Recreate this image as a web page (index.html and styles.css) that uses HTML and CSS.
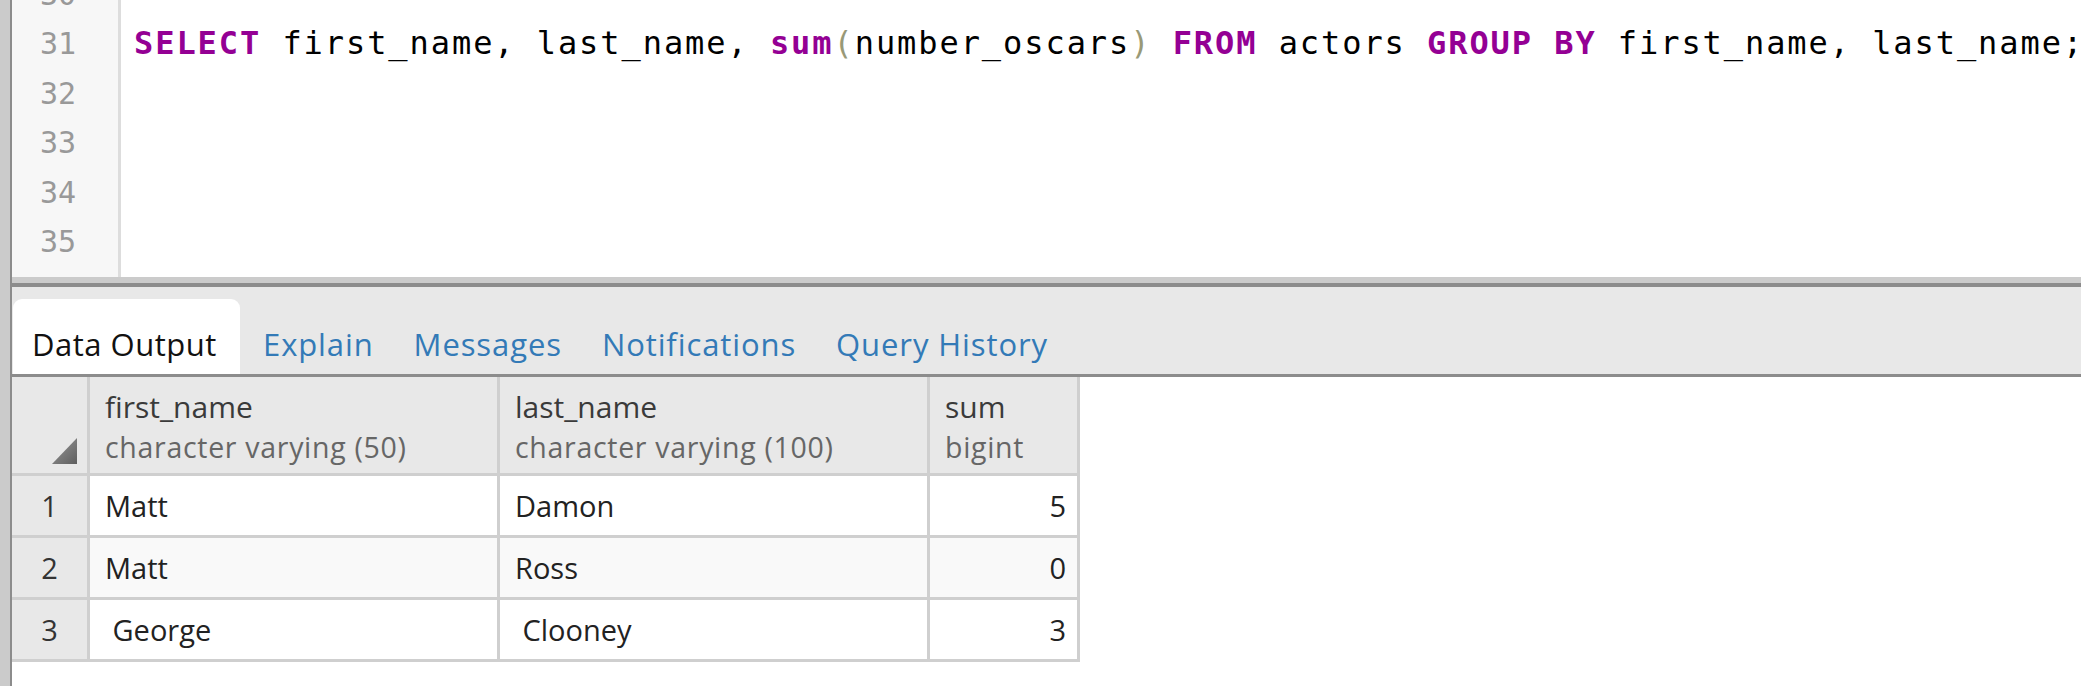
FILE: index.html
```html
<!DOCTYPE html>
<html>
<head>
<meta charset="utf-8">
<link rel="stylesheet" href="styles.css">
</head>
<body>
<div class="app">
  <div class="frame">
    <div class="editor">
      <div class="gutter">
        <div class="ln">30</div>
        <div class="ln">31</div>
        <div class="ln">32</div>
        <div class="ln">33</div>
        <div class="ln">34</div>
        <div class="ln">35</div>
      </div>
      <div class="code">
        <div class="line">&nbsp;</div>
        <div class="line"><span class="kw">SELECT</span> first_name, last_name, <span class="kw">sum</span><span class="br">(</span>number_oscars<span class="br">)</span> <span class="kw">FROM</span> actors <span class="kw">GROUP BY</span> first_name, last_name;</div>
        <div class="line">&nbsp;</div>
        <div class="line">&nbsp;</div>
        <div class="line">&nbsp;</div>
        <div class="line">&nbsp;</div>
      </div>
    </div>
    <div class="splitter"></div>
    <div class="results">
      <div class="tabs">
        <div class="tab active">Data Output</div>
        <div class="tab">Explain</div>
        <div class="tab">Messages</div>
        <div class="tab">Notifications</div>
        <div class="tab">Query History</div>
      </div>
      <div class="grid">
        <div class="hcell corner"><span class="tri"></span></div>
        <div class="hcell"><div class="hname">first_name</div><div class="htype">character varying (50)</div></div>
        <div class="hcell"><div class="hname">last_name</div><div class="htype">character varying (100)</div></div>
        <div class="hcell"><div class="hname">sum</div><div class="htype">bigint</div></div>

        <div class="rn">1</div>
        <div class="cell">Matt</div>
        <div class="cell">Damon</div>
        <div class="cell num">5</div>

        <div class="rn">2</div>
        <div class="cell alt">Matt</div>
        <div class="cell alt">Ross</div>
        <div class="cell alt num">0</div>

        <div class="rn">3</div>
        <div class="cell">&nbsp;George</div>
        <div class="cell">&nbsp;Clooney</div>
        <div class="cell num">3</div>
      </div>
    </div>
  </div>
</div>
</body>
</html>
```

FILE: styles.css
```css
html, body {
  margin: 0;
  padding: 0;
  background: #ffffff;
}

.app {
  height: 686px;
  border-left: 10px solid #cbcbcb;
  overflow: hidden;
}

.frame {
  height: 686px;
  border-left: 2px solid #8c8c8c;
  display: flex;
  flex-direction: column;
}

.editor {
  height: 277px;
  flex: none;
  display: flex;
  overflow: hidden;
  background: #ffffff;
}

.gutter {
  width: 106px;
  flex: none;
  background: #f7f7f7;
  border-right: 3px solid #dddddd;
  font-family: "DejaVu Sans Mono", monospace;
  font-size: 30px;
  color: #999999;
}

.ln {
  height: 49.5px;
  line-height: 49.5px;
  padding-left: 28px;
}

.gutter .ln:first-child,
.code .line:first-child {
  margin-top: -30.5px;
}

.code {
  flex: 1;
  min-width: 0;
  padding-left: 13px;
  font-family: "DejaVu Sans Mono", monospace;
  font-size: 32px;
  letter-spacing: 1.93px;
  color: #000000;
}

.line {
  height: 49.5px;
  line-height: 49.5px;
  white-space: pre;
}

.kw {
  color: #940094;
  font-weight: bold;
}

.br {
  color: #999977;
}

.splitter {
  height: 6px;
  background: #cbcbcb;
  flex: none;
}

.results {
  flex: 1;
  border-top: 4px solid #8c8c8c;
  background: #ffffff;
}

.tabs {
  height: 87px;
  background: #e8e8e8;
  border-bottom: 3px solid #8c8c8c;
  display: flex;
  align-items: flex-end;
  font-family: "Open Sans", sans-serif;
  font-size: 31px;
  letter-spacing: 0.9px;
}

.tab {
  height: 75px;
  box-sizing: border-box;
  padding: 22px 17px 0 23px;
  line-height: 46px;
  color: #337ab7;
  white-space: nowrap;
}

.tab.active {
  margin-left: 1px;
  width: 227px;
  background: #ffffff;
  color: #111111;
  border-radius: 9px 9px 0 0;
  padding-left: 19px;
  letter-spacing: 0.5px;
}

.grid {
  display: grid;
  grid-template-columns: 75px 407px 427px 147px;
  grid-template-rows: 96px 59px 59px 59px;
  gap: 3px;
  padding: 0 3px 3px 0;
  background: #cfcfcf;
  width: max-content;
  font-family: "Open Sans", sans-serif;
}

.hcell {
  background: #e8e8e8;
  padding: 10px 0 0 15px;
}

.hname {
  font-size: 30px;
  line-height: 40px;
  color: #3a3a3a;
}

.htype {
  font-size: 28.5px;
  line-height: 40px;
  letter-spacing: 0.7px;
  color: #666666;
}

.corner {
  padding: 0 10px 9px 0;
  display: flex;
  justify-content: flex-end;
  align-items: flex-end;
}

.tri {
  width: 25px;
  height: 26px;
  background: linear-gradient(135deg, #9a9a9a, #5e5e5e);
  clip-path: polygon(100% 0, 100% 100%, 0 100%);
}

.rn {
  background: #e8e8e8;
  color: #333333;
  font-size: 29px;
  display: flex;
  align-items: center;
  justify-content: center;
}

.cell {
  background: #ffffff;
  color: #222222;
  font-size: 29px;
  padding-left: 15px;
  display: flex;
  align-items: center;
  white-space: pre;
}

.cell.alt {
  background: #f9f9f9;
}

.cell.num {
  justify-content: flex-end;
  padding: 0 11px 0 0;
}
```
